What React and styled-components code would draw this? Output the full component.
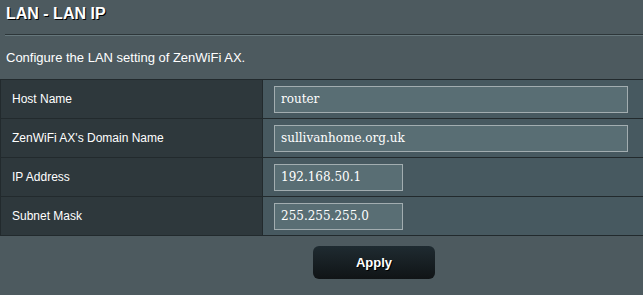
import React from 'react';
import styled, { createGlobalStyle } from 'styled-components';

const GlobalStyle = createGlobalStyle`
  html, body {
    margin: 0;
    padding: 0;
    background: #4d5a5f;
  }
  body {
    font-family: "Liberation Sans", Arial, sans-serif;
    color: #fff;
    overflow: hidden;
  }
`;

const rows = [
  { label: 'Host Name', value: 'router', wide: true },
  { label: "ZenWiFi AX's Domain Name", value: 'sullivanhome.org.uk', wide: true },
  { label: 'IP Address', value: '192.168.50.1' },
  { label: 'Subnet Mask', value: '255.255.255.0' },
];

const App = () => {
  return (
    <>
      <GlobalStyle />
      <Page>
        <Head>
          <Title>LAN - LAN IP</Title>
          <Divider />
          <Desc>Configure the LAN setting of ZenWiFi AX.</Desc>
        </Head>
        <Table>
          <tbody>
            {rows.map(r => (
              <tr key={r.label}>
                <Label>{r.label}</Label>
                <Value>
                  <Input $wide={r.wide} defaultValue={r.value} />
                </Value>
              </tr>
            ))}
          </tbody>
        </Table>
        <Footer>
          <ApplyButton>Apply</ApplyButton>
        </Footer>
      </Page>
    </>
  );
};

export default App;

const Page = styled.div`
  width: 643px;
  height: 295px;
  overflow: hidden;
`;

const Head = styled.div`
  padding: 5px 0 0 5px;
`;

const Title = styled.div`
  font-size: 16px;
  font-weight: bold;
  color: #fff;
  text-shadow: 1px 1px 0 #000;
  line-height: 18px;
  padding-left: 1px;
`;

const Divider = styled.div`
  margin-top: 11px;
  height: 1px;
  background: #2d3639;
  border-bottom: 1px solid #66777c;
`;

const Desc = styled.div`
  font-size: 13px;
  line-height: 16px;
  color: #fff;
  margin-top: 14px;
  padding-left: 1px;
`;

const Table = styled.table`
  margin-top: 13px;
  border-collapse: collapse;
  width: 660px;
  border-top: 1px solid #222a2d;
  border-left: 1px solid #222a2d;
`;

const Label = styled.td`
  width: 250px;
  height: 38px;
  padding: 0 0 0 11px;
  background: #2e383c;
  border: 1px solid #222a2d;
  font-size: 12px;
  color: #fff;
`;

const Value = styled.td`
  height: 38px;
  padding: 0 0 0 11px;
  background: #475960;
  border: 1px solid #222a2d;
`;

const Input = styled.input`
  box-sizing: border-box;
  display: block;
  width: ${p => (p.$wide ? '354px' : '129px')};
  height: 27px;
  padding: 0 6px;
  background: #596e74;
  border: 1px solid #a2adb0;
  color: #fff;
  font-family: "DejaVu Serif", serif;
  font-size: 12px;
  outline: none;
`;

const Footer = styled.div`
  padding: 10px 0 0 313px;
`;

const ApplyButton = styled.button`
  width: 122px;
  height: 33px;
  border: none;
  border-radius: 6px;
  background: linear-gradient(#1f2b31, #101416);
  color: #fff;
  font-family: "Liberation Sans", Arial, sans-serif;
  font-size: 13px;
  font-weight: bold;
  text-shadow: 1px 1px 0 #000;
  cursor: pointer;
`;
